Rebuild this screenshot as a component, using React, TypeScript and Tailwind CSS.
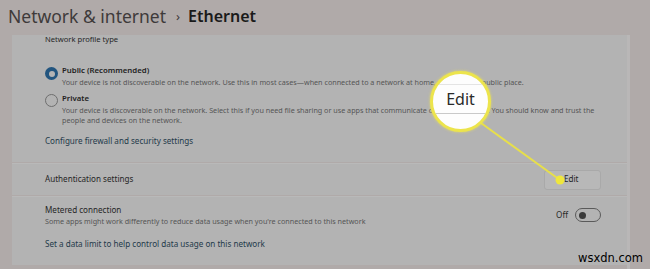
import React from "react";

function RadioSelected() {
  return (
    <div className="w-[13px] h-[13px] rounded-full bg-[#22557f] flex items-center justify-center shrink-0">
      <div className="w-[6px] h-[6px] rounded-full bg-[#b4b4b4]" />
    </div>
  );
}

function RadioEmpty() {
  return <div className="w-[13px] h-[13px] rounded-full border border-[#6e6e6e] shrink-0" />;
}

export default function App() {
  return (
    <div
      className="relative w-[650px] h-[269px] overflow-hidden bg-[#b0aaa9] flex flex-col"
      style={{ fontFamily: '"Noto Sans", "Open Sans", sans-serif' }}
    >
      {/* Header */}
      <div className="h-[35px] pl-[8px] pt-[2px] flex items-start text-[17.5px] leading-[28px]">
        <span className="text-[#3e3a3a]">Network &amp; internet</span>
        <span className="text-[#3e3a3a] ml-[10px] mr-[8px] text-[13px]">›</span>
        <span className="text-[#1a1a1a] font-semibold text-[16px]">Ethernet</span>
      </div>

      {/* Panel */}
      <div className="flex-1 ml-[12px] w-[618px] flex flex-col border-r-[3px] border-[#b9b7b7]">
        {/* Card 1 */}
        <div className="h-[127px] bg-[#b3b3b3] pl-[33px] flex flex-col text-[#262626]">
          <div className="h-[9px] leading-[9px] text-[7.6px]">Network profile type</div>
          <div className="mt-[19px] flex items-start">
            <div className="mt-[4px]"><RadioSelected /></div>
            <div className="ml-[4px] flex flex-col">
              <div className="text-[7.8px] leading-[14px] font-semibold text-[#222]">Public (Recommended)</div>
              <div className="text-[7.2px] leading-[10px] text-[#555]">
                Your device is not discoverable on the network. Use this in most cases—when connected to a network at home, work, or in a public place.
              </div>
            </div>
          </div>
          <div className="mt-[4px] flex items-start">
            <div className="mt-[3px]"><RadioEmpty /></div>
            <div className="ml-[4px] flex flex-col">
              <div className="text-[7.8px] leading-[14px] font-semibold text-[#222]">Private</div>
              <div className="text-[7.2px] leading-[10px] text-[#555] w-[535px]">
                Your device is discoverable on the network. Select this if you need file sharing or use apps that communicate over this network. You should know and trust the people and devices on the network.
              </div>
            </div>
          </div>
          <div className="mt-[9px] text-[8.1px] leading-[14px] text-[#1f3a4a]">Configure firewall and security settings</div>
        </div>

        {/* Card 2 */}
        <div className="mt-[1px] h-[32px] bg-[#b3b3b3] border-t border-[#b9b9b9] pl-[33px] pr-[26px] flex items-center justify-between">
          <div className="text-[8.1px] text-[#262626]">Authentication settings</div>
          <div className="w-[57px] h-[20px] rounded-[3px] bg-[#b8b8b8] border border-[#a9a9a9] flex items-center pl-[19px] text-[8.1px] text-[#262626]">
            Edit
          </div>
        </div>

        {/* Card 3 */}
        <div className="mt-[1px] h-[69px] bg-[#b3b3b3] border-t border-[#b9b9b9] pl-[33px] pr-[26px] flex flex-col">
          <div className="flex items-center justify-between mt-[6px]">
            <div className="flex flex-col">
              <div className="text-[8.1px] leading-[13px] text-[#262626]">Metered connection</div>
              <div className="text-[7.2px] leading-[11px] text-[#555]">
                Some apps might work differently to reduce data usage when you're connected to this network
              </div>
            </div>
            <div className="flex items-center gap-[7px]">
              <span className="text-[8.1px] text-[#262626]">Off</span>
              <div className="w-[26px] h-[14px] rounded-full border border-[#5a5a5a] flex items-center pl-[3px]">
                <div className="w-[7px] h-[7px] rounded-full bg-[#3a3a3a]" />
              </div>
            </div>
          </div>
          <div className="mt-[10px] text-[8.1px] leading-[14px] text-[#1f3a4a]">
            Set a data limit to help control data usage on this network
          </div>
        </div>
      </div>

      {/* Callout line and dot */}
      <svg className="absolute left-0 top-0" width="650" height="269">
        <line x1="481" y1="123" x2="560" y2="180" stroke="#e7df4a" strokeWidth="2" />
        <circle cx="560" cy="180" r="4.5" fill="#efe73c" />
      </svg>

      {/* Magnifier */}
      <div className="absolute left-[430px] top-[71px] w-[61px] h-[61px] rounded-full border-[3px] border-[#ece44c] bg-[#fdfdfd] overflow-hidden shadow-[0_0_3px_rgba(240,230,80,0.8)]">
        <div className="absolute left-0 right-0 top-[10px] h-px bg-[#e4e4e4]" />
        <div className="absolute left-0 right-0 top-[15px] text-center text-[16px] leading-[20px] text-[#2a2a2a]">Edit</div>
        <div className="absolute left-0 right-0 top-[39px] h-px bg-[#c9c9c9]" />
      </div>

      {/* Watermark */}
      <div
        className="absolute left-[578px] top-[250px] text-[11.5px] leading-[16px] text-black"
        style={{ fontFamily: '"DejaVu Sans", sans-serif' }}
      >
        wsxdn.com
      </div>
    </div>
  );
}
